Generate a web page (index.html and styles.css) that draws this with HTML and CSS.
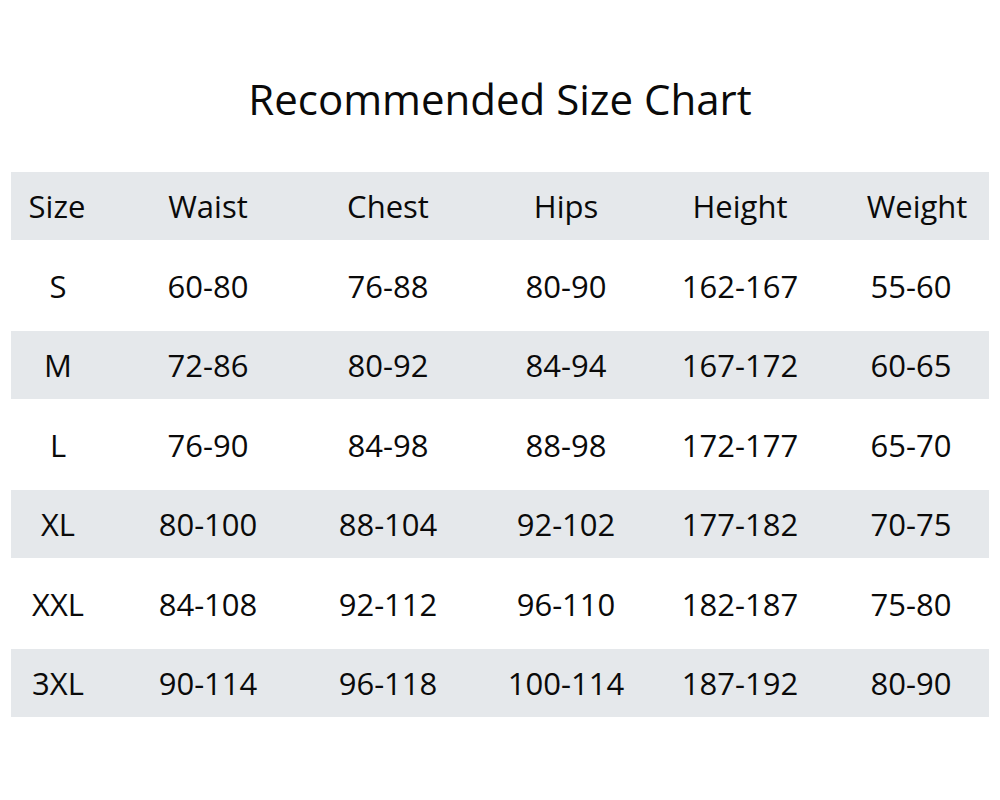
FILE: index.html
```html
<!DOCTYPE html>
<html lang="en">
<head>
<meta charset="utf-8">
<title>Recommended Size Chart</title>
<link rel="stylesheet" href="styles.css">
</head>
<body>
<main class="page">
  <h1 class="title">Recommended Size Chart</h1>
  <div class="chart">
    <div class="row band head">
      <span class="c1">Size</span><span class="c2">Waist</span><span class="c3">Chest</span><span class="c4">Hips</span><span class="c5">Height</span><span class="c6">Weight</span>
    </div>
    <div class="row plain">
      <span class="c1">S</span><span class="c2">60-80</span><span class="c3">76-88</span><span class="c4">80-90</span><span class="c5">162-167</span><span class="c6">55-60</span>
    </div>
    <div class="row band">
      <span class="c1">M</span><span class="c2">72-86</span><span class="c3">80-92</span><span class="c4">84-94</span><span class="c5">167-172</span><span class="c6">60-65</span>
    </div>
    <div class="row plain">
      <span class="c1">L</span><span class="c2">76-90</span><span class="c3">84-98</span><span class="c4">88-98</span><span class="c5">172-177</span><span class="c6">65-70</span>
    </div>
    <div class="row band">
      <span class="c1">XL</span><span class="c2">80-100</span><span class="c3">88-104</span><span class="c4">92-102</span><span class="c5">177-182</span><span class="c6">70-75</span>
    </div>
    <div class="row plain">
      <span class="c1">XXL</span><span class="c2">84-108</span><span class="c3">92-112</span><span class="c4">96-110</span><span class="c5">182-187</span><span class="c6">75-80</span>
    </div>
    <div class="row band">
      <span class="c1">3XL</span><span class="c2">90-114</span><span class="c3">96-118</span><span class="c4">100-114</span><span class="c5">187-192</span><span class="c6">80-90</span>
    </div>
  </div>
</main>
</body>
</html>
```
FILE: styles.css
```css
html, body {
  margin: 0;
  padding: 0;
  background: #ffffff;
}
body {
  font-family: "Open Sans", "Noto Sans", sans-serif;
  color: #0a0a0a;
  width: 1000px;
  height: 800px;
}
.page {
  padding-top: 66px;
}
.title {
  margin: 0;
  height: 106px;
  text-align: center;
  font-weight: 400;
  font-size: 42px;
  line-height: 66px;
}
.chart {
  margin: 0 11px;
  width: 978px;
}
.row {
  display: grid;
  grid-template-columns: 94px 206px 154px 202px 146px 176px;
  align-items: center;
  font-size: 31px;
  font-weight: 450;
}
.row span {
  text-align: center;
  white-space: nowrap;
}
.row .c6 {
  padding-left: 20px;
}
.head .c6 {
  padding-left: 32px;
}
.head .c1 {
  padding-right: 2px;
}
.band {
  height: 68px;
  background: #e5e8eb;
}
.plain {
  height: 91px;
}
```
